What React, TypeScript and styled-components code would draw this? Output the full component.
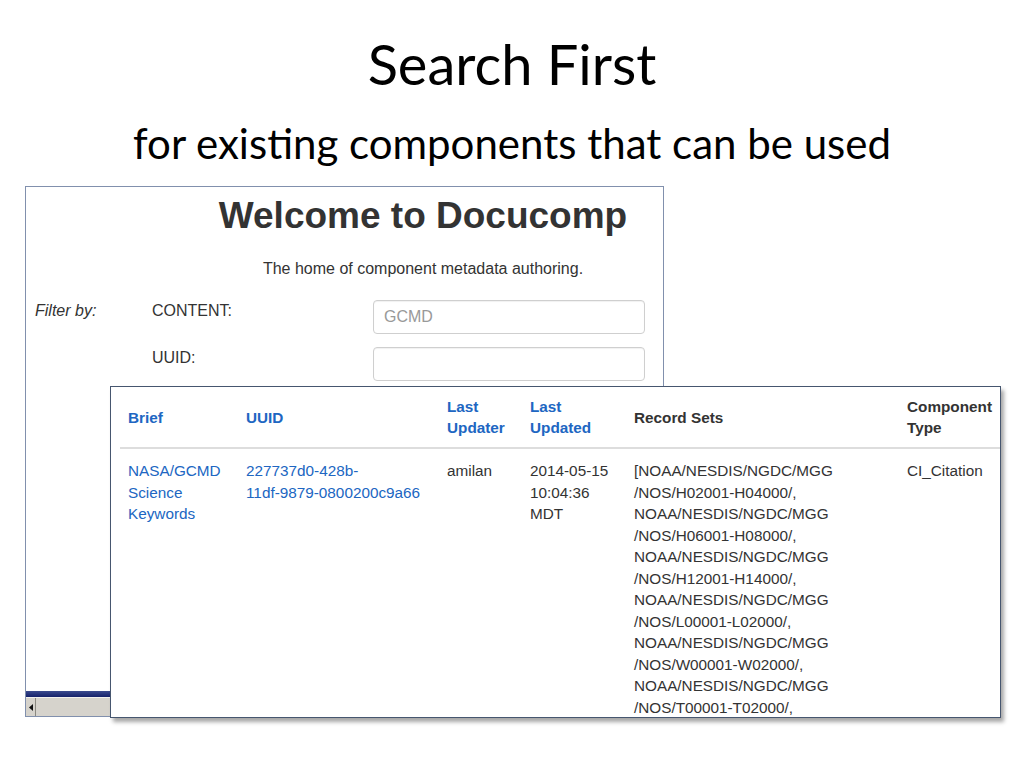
import React from 'react'
import styled, { createGlobalStyle } from 'styled-components'

const GlobalStyle = createGlobalStyle`
  html, body {
    margin: 0;
    padding: 0;
    background: #ffffff;
  }
`

const recordSets = [
  '[NOAA/NESDIS/NGDC/MGG',
  '/NOS/H02001-H04000/,',
  'NOAA/NESDIS/NGDC/MGG',
  '/NOS/H06001-H08000/,',
  'NOAA/NESDIS/NGDC/MGG',
  '/NOS/H12001-H14000/,',
  'NOAA/NESDIS/NGDC/MGG',
  '/NOS/L00001-L02000/,',
  'NOAA/NESDIS/NGDC/MGG',
  '/NOS/W00001-W02000/,',
  'NOAA/NESDIS/NGDC/MGG',
  '/NOS/T00001-T02000/,',
]

const columns = [
  { label: ['Brief'], width: 118, link: true },
  { label: ['UUID'], width: 201, link: true },
  { label: ['Last', 'Updater'], width: 83, link: true },
  { label: ['Last', 'Updated'], width: 104, link: true },
  { label: ['Record Sets'], width: 273, link: false },
  { label: ['Component', 'Type'], width: 110, link: false },
]

const Lines = ({ lines }: { lines: string[] }) => (
  <>
    {lines.map((l, i) => (
      <Line key={i}>{l}</Line>
    ))}
  </>
)

export default function App() {
  return (
    <>
      <GlobalStyle />
      <Slide>
        <Title>Search First</Title>
        <Subtitle>for existing components that can be used</Subtitle>

        <BackWindow>
          <PageArea>
            <Page>
              <Welcome>Welcome to Docucomp</Welcome>
              <Tagline>The home of component metadata authoring.</Tagline>
              <FilterForm>
                <FilterLabel>Filter by:</FilterLabel>
                <FieldLabel>CONTENT:</FieldLabel>
                <TextInput placeholder="GCMD" />
                <span />
                <FieldLabel>UUID:</FieldLabel>
                <TextInput />
              </FilterForm>
            </Page>
          </PageArea>
          <NavyBar />
          <ScrollTrack>
            <ScrollArrow>
              <svg width="4" height="7" viewBox="0 0 4 7">
                <path d="M4 0 L0 3.5 L4 7 Z" fill="#111" />
              </svg>
            </ScrollArrow>
          </ScrollTrack>
        </BackWindow>

        <FrontWindow>
          <ResultsTable>
            <colgroup>
              {columns.map((c, i) => (
                <col key={i} style={{ width: c.width }} />
              ))}
            </colgroup>
            <thead>
              <tr>
                {columns.map((c, i) => (
                  <HeadCell key={i} $link={c.link}>
                    <Lines lines={c.label} />
                  </HeadCell>
                ))}
              </tr>
            </thead>
            <tbody>
              <tr>
                <BodyCell $link>
                  <Lines lines={['NASA/GCMD', 'Science', 'Keywords']} />
                </BodyCell>
                <BodyCell $link>
                  <Lines lines={['227737d0-428b-', '11df-9879-0800200c9a66']} />
                </BodyCell>
                <BodyCell>amilan</BodyCell>
                <BodyCell>
                  <Lines lines={['2014-05-15', '10:04:36', 'MDT']} />
                </BodyCell>
                <BodyCell>
                  <Lines lines={recordSets} />
                </BodyCell>
                <BodyCell>CI_Citation</BodyCell>
              </tr>
            </tbody>
          </ResultsTable>
        </FrontWindow>
      </Slide>
    </>
  )
}

const Slide = styled.div`
  position: relative;
  width: 1024px;
  height: 768px;
  overflow: hidden;
  background: #ffffff;
  display: flex;
  flex-direction: column;
  align-items: center;
  font-family: Lato, 'Open Sans', sans-serif;
  color: #000;
`

const Title = styled.h1`
  margin: 30px 0 0;
  font-size: 56px;
  font-weight: 400;
  line-height: 1.2;
`

const Subtitle = styled.h2`
  margin: 21px 0 0;
  font-size: 42px;
  font-weight: 400;
  line-height: 1.2;
`

const BackWindow = styled.div`
  position: absolute;
  left: 25px;
  top: 186px;
  width: 637px;
  height: 529px;
  border: 1px solid #8190ad;
  background: #fff;
  display: flex;
  flex-direction: column;
  font-family: 'Liberation Sans', Arial, sans-serif;
`

const PageArea = styled.div`
  flex: 1;
  overflow: hidden;
`

const Page = styled.div`
  width: 794px;
  color: #333;
`

const Welcome = styled.div`
  margin-top: 9px;
  text-align: center;
  font-size: 37px;
  font-weight: 700;
  line-height: 1.1;
  color: #333;
`

const Tagline = styled.div`
  margin-top: 21px;
  text-align: center;
  font-size: 16px;
  line-height: 22px;
`

const FilterForm = styled.div`
  margin-top: 20px;
  padding-left: 9px;
  display: grid;
  grid-template-columns: 117px 221px 272px;
  row-gap: 13px;
  align-items: start;
`

const FilterLabel = styled.span`
  font-size: 16px;
  line-height: 22px;
  font-style: italic;
`

const FieldLabel = styled.span`
  font-size: 16px;
  line-height: 22px;
`

const TextInput = styled.input`
  box-sizing: border-box;
  height: 34px;
  width: 272px;
  padding: 0 10px;
  border: 1px solid #cfcfcf;
  border-radius: 4px;
  box-shadow: inset 0 1px 1px rgba(0, 0, 0, 0.06);
  font-family: 'Liberation Sans', Arial, sans-serif;
  font-size: 16px;
  color: #555;
  outline: none;

  &::placeholder {
    color: #999;
  }
`

const NavyBar = styled.div`
  height: 6px;
  background: linear-gradient(#3a4a8e, #14206a);
`

const ScrollTrack = styled.div`
  height: 18px;
  display: flex;
  align-items: stretch;
  background: #d6d3cc;
  border-top: 1px solid #f2f1ed;
`

const ScrollArrow = styled.div`
  width: 9px;
  display: flex;
  align-items: center;
  justify-content: center;
  background: #d6d3cc;
  border-right: 1px solid #8a8880;
`

const FrontWindow = styled.div`
  position: absolute;
  left: 110px;
  top: 386px;
  width: 889px;
  height: 330px;
  border: 1px solid #46566f;
  background: #fff;
  overflow: hidden;
  box-shadow: 3px 4px 4px rgba(0, 0, 0, 0.35);
  font-family: 'Liberation Sans', Arial, sans-serif;
`

const ResultsTable = styled.table`
  margin-left: 9px;
  border-collapse: collapse;
  table-layout: fixed;
  width: 889px;
`

const Line = styled.span`
  display: block;
  white-space: nowrap;
`

const HeadCell = styled.th<{ $link?: boolean }>`
  padding: 9px 8px;
  text-align: left;
  vertical-align: middle;
  font-size: 15.3px;
  font-weight: 700;
  line-height: 21px;
  color: ${(p) => (p.$link ? '#2066c2' : '#333')};
  border-bottom: 2px solid #dddddd;
`

const BodyCell = styled.td<{ $link?: boolean }>`
  padding: 11px 8px 0;
  vertical-align: top;
  font-size: 15.3px;
  line-height: 21.5px;
  color: ${(p) => (p.$link ? '#2066c2' : '#333')};
`
